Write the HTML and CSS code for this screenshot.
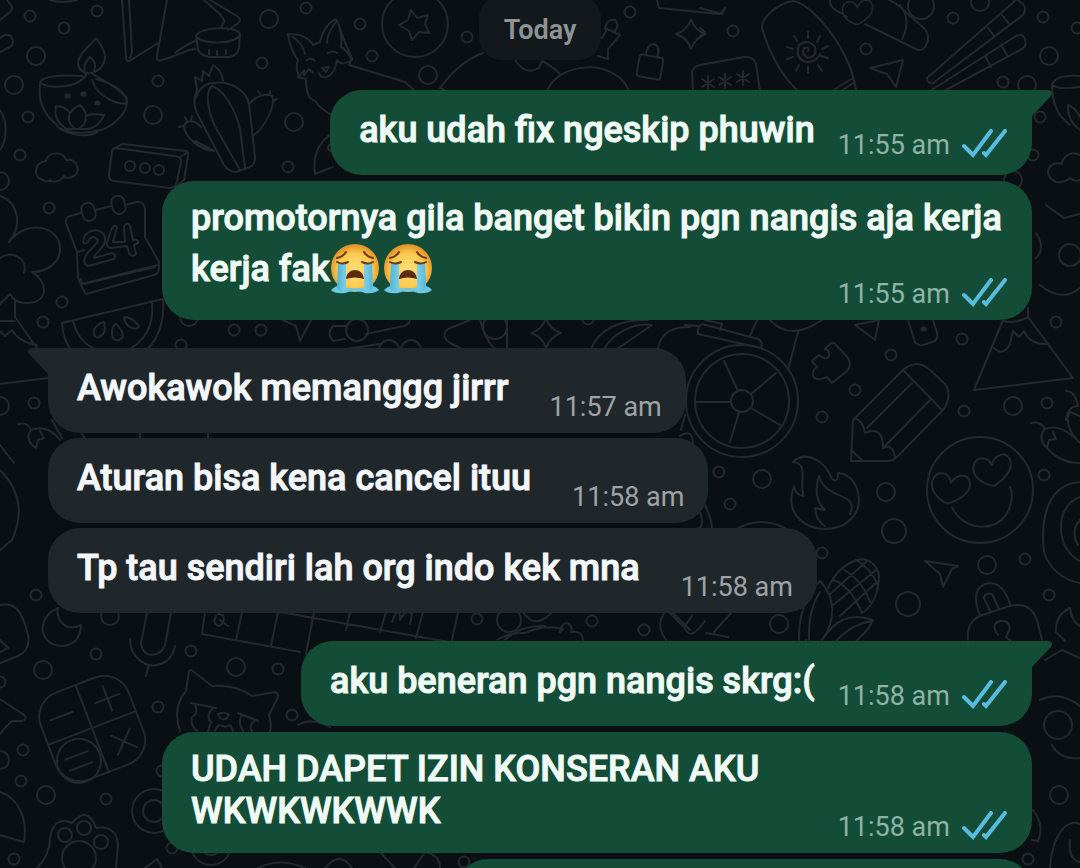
FILE: index.html
```html
<!DOCTYPE html>
<html lang="id">

<head>
    <meta charset="UTF-8">
    <meta name="viewport" content="width=device-width, initial-scale=1.0">
    <title>Chat</title>
    <link rel="stylesheet" href="styles.css">
</head>

<body>
    <!-- doodle wallpaper -->
    <svg class="wallpaper" viewBox="0 0 1080 868" preserveAspectRatio="xMidYMid slice" aria-hidden="true">
        <defs>
            <circle id="s" r="5.5" />
            <circle id="m" r="9" />
            <path id="heart" d="M0 17C-12 14-22 6-19-5C-16-14-4-14-1-4C3-15 15-17 18-7C20 3 9 12 0 17Z" />
            <path id="spark" d="M0-15Q4-3 15 0Q4 4 0 15Q-3 4-15 0Q-4-3 0-15Z" />
            <path id="ast" d="M0-7V7M-6-4L6 4M-6 4L6-4" />
        </defs>

        <!-- dots -->
        <use href="#s" x="30" y="16" /><use href="#s" x="97" y="11" /><use href="#s" x="64" y="28" />
        <use href="#s" x="306" y="8" /><use href="#s" x="262" y="63" /><use href="#s" x="158" y="81" />
        <use href="#s" x="28" y="117" /><use href="#s" x="20" y="155" /><use href="#s" x="288" y="167" />
        <use href="#s" x="49" y="208" /><use href="#s" x="62" y="302" /><use href="#s" x="43" y="322" />
        <use href="#s" x="234" y="330" /><use href="#s" x="261" y="330" /><use href="#s" x="181" y="345" />
        <use href="#s" x="34" y="403" /><use href="#s" x="360" y="24" /><use href="#s" x="467" y="37" />
        <use href="#s" x="372" y="56" /><use href="#s" x="630" y="12" /><use href="#s" x="733" y="31" />
        <use href="#s" x="866" y="49" /><use href="#s" x="953" y="18" /><use href="#s" x="1043" y="17" />
        <use href="#s" x="1077" y="28" /><use href="#s" x="1003" y="82" /><use href="#s" x="1040" y="117" />
        <use href="#s" x="1033" y="155" /><use href="#s" x="891" y="355" /><use href="#s" x="855" y="390" />
        <use href="#s" x="822" y="417" /><use href="#s" x="962" y="339" /><use href="#s" x="964" y="411" />
        <use href="#s" x="1056" y="322" /><use href="#s" x="1047" y="403" /><use href="#s" x="719" y="472" />
        <use href="#s" x="730" y="504" /><use href="#s" x="822" y="553" /><use href="#s" x="1044" y="475" />
        <use href="#s" x="1025" y="559" /><use href="#s" x="1049" y="595" /><use href="#s" x="36" y="595" />
        <use href="#s" x="96" y="654" /><use href="#s" x="191" y="651" /><use href="#s" x="278" y="669" />
        <use href="#s" x="158" y="707" /><use href="#s" x="292" y="715" /><use href="#s" x="23" y="750" />
        <use href="#s" x="21" y="781" /><use href="#s" x="106" y="799" /><use href="#s" x="14" y="859" />
        <use href="#s" x="172" y="848" /><use href="#s" x="0" y="682" /><use href="#s" x="162" y="771" />
        <use href="#s" x="477" y="619" /><use href="#s" x="592" y="621" /><use href="#s" x="644" y="630" />
        <use href="#s" x="588" y="319" /><use href="#s" x="464" y="862" /><use href="#s" x="1028" y="859" />
        <use href="#m" x="36" y="56" /><use href="#m" x="14" y="85" /><use href="#m" x="269" y="19" />
        <use href="#m" x="153" y="115" /><use href="#m" x="294" y="122" /><use href="#m" x="0" y="181" />
        <use href="#m" x="0" y="406" /><use href="#m" x="189" y="317" /><use href="#m" x="428" y="75" />
        <use href="#m" x="980" y="2" /><use href="#m" x="1049" y="56" /><use href="#m" x="1027" y="85" />
        <use href="#m" x="1013" y="180" /><use href="#m" x="1013" y="406" /><use href="#m" x="762" y="479" />
        <use href="#m" x="886" y="492" /><use href="#m" x="987" y="565" /><use href="#m" x="779" y="624" />
        <use href="#m" x="43" y="670" /><use href="#m" x="236" y="667" /><use href="#m" x="110" y="616" />
        <use href="#m" x="46" y="795" /><use href="#m" x="0" y="760" /><use href="#m" x="1059" y="795" />
        <circle cx="894" cy="531" r="12" /><circle cx="908" cy="604" r="12" /><circle cx="509" cy="620" r="12" />

        <!-- diya lamp -->
        <path d="M96 38C90 46 78 54 78 64C79 70 84 74 90 73C98 73 105 65 105 56C104 48 99 42 96 38ZM90 57C85 62 83 66 85 71M90 57C95 61 97 65 94 71M87 73C84 80 78 83 71 85C60 88 43 87 40 82C45 75 65 75 82 76M92 73C96 78 112 82 127 98M96 79C112 83 127 92 127 103C120 105 98 99 92 80M40 84C38 100 42 113 56 124C60 135 93 139 98 131C114 127 127 112 127 103M58 127C68 134 88 134 98 130M56 106C62 106 67 109 70 113C72 110 76 107 80 105C84 109 86 112 86 116C91 113 97 114 104 115C101 123 94 129 86 129H67C57 123 54 115 56 106M70 113Q66 122 74 128M86 116Q86 124 80 128" />
        <path d="M67 96h1M83 94h1M97 103h1" stroke-width="5" />
        <!-- map and pot -->
        <path d="M122 0L126 58Q127 63 131 60L158 43M129 0L132 52L130 58M167 0L157 56Q156 62 162 60C175 57 185 50 195 49M175 53Q185 45 195 41M204 0C210 6 222 14 224 20C226 24 220 23 222 27M210 0L237 16Q243 20 237 24L228 30M0 52L10 47Q15 43 12 38Q10 34 5 35L0 38M0 20L10 12Q14 8 10 4L7 0M50 0Q62 4 77 0" />
        <path d="M196 36C200 26 238 26 240 34C238 45 200 45 196 36ZM196 36L198 50Q201 56 210 57H230Q238 55 239 48L240 34M209 50V54M217 51V55M226 50V54" />
        <!-- cactus -->
        <path d="M197 90L195 77L202 81L203 71L209 76L213 65Q222 70 223 81M197 90C194 97 192 105 198 115L224 165Q229 172 236 172L250 167Q256 163 255 157L249 104C246 90 230 80 212 83C204 84 198 91 195 100M212 86C203 94 210 120 220 135L240 170M212 86C228 92 240 120 241 137L245 168M249 104C256 96 265 93 272 96C276 105 265 127 254 135M195 141L214 151C200 150 185 138 184 126C187 119 195 120 201 127M260 94L258 91M270 94V91M273 101L277 99M183 126L179 127M187 121L185 117M191 120L192 116" />
        <!-- fox -->
        <path d="M288 34C300 34 309 38 313 45L320 42C323 30 329 22 336 19C341 27 342 38 341 47C345 49 350 55 352 60C346 64 340 65 337 60C336 68 333 74 327 77Q320 78 319 73M288 34C290 47 294 55 298 60Q295 67 299 77L304 70V75L309 69L313 73M293 37Q303 44 305 54M327 43C327 34 332 27 336 22M307 60Q312 57 315 61M328 53Q333 50 337 53M322 68L329 67L326 72ZM298 77L306 79Q306 92 310 98L315 101C320 108 326 112 333 116M350 65L362 69" />
        <path d="M333 133C320 140 312 155 315 174L333 167M333 142Q323 149 333 152" />
        <!-- cloud and ticket box -->
        <path d="M43 180C33 178 33 163 46 161C48 151 64 151 66 160C78 157 82 174 72 177C67 179 65 178 64 176C58 184 51 182 50 180Q46 183 43 180Z" />
        <path d="M116 148L174 156Q181 156 181 162L177 181Q176 188 170 188L114 181Q108 180 109 174L112 152Q112 148 116 148ZM114 149L122 144L186 151Q189 152 188 156L184 180L176 187M180 157L187 153" />
        <circle cx="130" cy="166" r="5" /><circle cx="145" cy="168" r="5" /><circle cx="159" cy="170" r="5" />
        <!-- calendar -->
        <path d="M81 213L70 216Q65 218 66 223L77 252L78 278Q82 288 86 294L154 275Q159 273 159 268V262L145 237V209Q144 201 136 202L125 205M95 210L112 206M78 252L84 250M82 284L158 265M81 279Q80 285 88 283L155 267" />
        <rect x="82" y="203" width="13" height="18" rx="6" transform="rotate(-15 88 212)" /><rect x="112" y="196" width="13" height="18" rx="6" transform="rotate(-15 118 205)" />
        <path d="M83 242C83 227 107 226 105 241C104 249 95 252 94 258L112 253Q117 254 114 259L88 266Q83 264 85 258C87 250 98 245 98 240Q92 233 88 242Q85 245 83 242ZM117 227L113 242H125L124 226Q128 221 130 226L133 240Q139 239 138 243L134 245L136 254Q132 258 129 253L127 246L110 248Q106 246 107 242L112 228Q115 224 117 227Z" />
        <!-- flower tree and melon slice -->
        <path d="M0 196C18 202 23 225 9 242C26 219 60 225 60 249C60 262 48 272 32 272C47 280 50 301 29 303Q15 304 10 294L0 304M0 258C12 250 28 258 24 273M15 300V317L37 348M0 321H15M0 331L5 336L12 330Q20 343 37 345M0 110C8 122 7 140 0 150" />
        <path d="M62 323L163 299C165 325 157 343 140 356H75C68 347 62 336 62 323ZM73 321C78 340 90 350 105 351H125C145 343 154 325 152 303M94 334C92 330 98 323 104 322Q107 334 99 337Q95 338 94 334ZM112 334Q112 325 116 324Q123 330 123 337Q118 343 113 338ZM124 317Q132 317 139 326Q137 331 130 327Q124 323 124 317Z" />
        <!-- strip between bubbles -->
        <path d="M283 320L296 326L300 341L311 320M345 326H333Q326 334 333 341L345 339M366 334L404 326Q411 324 410 318M340 350L380 344M470 320L448 329Q440 336 450 343L462 349M480 320Q485 340 495 349M507 318V349M591 349C598 330 620 319 648 320M604 349C612 335 632 322 652 325M617 349L652 325M658 349C660 332 675 326 690 327" />
        <circle cx="357" cy="330" r="11" /><circle cx="389" cy="350" r="10" /><circle cx="411" cy="350" r="10" /><circle cx="495" cy="327" r="12" />
        <use href="#spark" x="546" y="333" />
        <!-- star coin, hills -->
        <circle cx="415" cy="24" r="33" />
        <path d="M411 10L417 18L428 15L425 24L429 33L419 32L412 40L409 31L399 25L408 20ZM483 53Q460 61 440 88L446 91M515 60Q525 76 539 68L542 61Q552 66 560 74M547 91C559 61 616 58 629 91M340 30L352 59L349 65L405 82L415 91M605 29Q607 18 615 20Q620 25 615 31M602 38L607 29L620 35L608 49V59L598 56M657 0L659 8L720 14L724 9" />
        <!-- padlock, sparkle, password card -->
        <rect x="638" y="56" width="24" height="22" rx="3" transform="rotate(10 650 67)" /><path d="M646 55Q647 44 654 44Q661 47 657 58" />
        <use href="#spark" x="691" y="34" />
        <path d="M693 91L692 72Q694 66 700 65L744 57Q754 56 756 64L760 91M700 8L722 14L725 8M700 28L705 32L700 36" />
        <use href="#ast" x="708" y="83" /><use href="#ast" x="725" y="81" /><use href="#ast" x="743" y="78" />
        <!-- surfboard -->
        <path d="M798 91C778 72 767 45 762 28C761 18 778 3 793 1C812 3 851 50 856 91M832 91L853 78M841 91L855 82" />
        <path d="M808 51Q810 46 804 48Q801 54 808 58Q817 57 815 47Q808 38 799 45Q795 56 803 61Q814 65 820 54M808 32V38M794 36L797 41M787 47L793 49M787 59L793 57M796 71L799 65M808 73V67M822 71L818 65M828 58L821 56M828 46L822 49M820 36L817 42" />
        <!-- skateboard -->
        <path d="M830 0Q829 8 841 13L847 17M865 24L918 50Q924 51 927 43Q930 36 925 29L900 7Q894 2 889 0M900 5Q912 20 902 39" />
        <use href="#heart" transform="translate(858 11) scale(.8)" /><circle cx="921" cy="6" r="13" />
        <path d="M870 68L903 60L896 87L887 74Z" />
        <!-- chopsticks -->
        <path d="M1016 0L927 78Q927 84 933 83L1023 15Q1027 9 1023 4L1018 0M988 28L994 36M1002 15L1009 24M930 91L1016 36Q1023 33 1025 39Q1027 46 1022 49L944 91M985 56L991 67M1001 45L1008 57" />
        <!-- bowl, cloud -->
        <path d="M1080 76Q1055 74 1052 85Q1058 90 1080 87M1052 85Q1052 112 1070 125M1068 105Q1076 108 1080 117M1068 105Q1067 121 1080 130M1080 155C1070 150 1062 158 1062 164C1048 160 1042 176 1056 182Q1064 183 1070 178Q1074 182 1080 180" />
        <!-- wheel -->
        <circle cx="742" cy="401" r="56" /><circle cx="742" cy="401" r="47" /><circle cx="742" cy="401" r="11" />
        <path d="M738 391L724 361M751 394L776 373M751 408L780 425M739 412L730 442M731 402H696M702 324L758 339Q763 341 761 348L698 334Q697 327 702 324ZM705 320L722 324L720 330M757 320L750 336M770 320Q790 342 822 320M798 332L788 370M685 325L698 326M685 415L681 430M680 436Q693 428 693 444" />
        <!-- puzzle, arrow, card -->
        <path d="M831 343Q834 342 836 345L848 358Q852 366 847 371L832 383L827 377Q816 382 813 376Q812 370 817 367L812 361L819 355Q826 361 829 356Q830 350 825 349ZM855 325L879 320L875 340ZM908 320L915 342Q918 346 923 345L935 341Q938 338 937 333L933 320" />
        <path d="M923 329h1" stroke-width="5" />
        <!-- pencil -->
        <path d="M855 418L903 370Q917 358 930 370L945 384Q953 396 943 410L897 457Q893 461 886 461H851L853 421ZM912 383L867 428M930 400L885 446M903 370L942 410M855 418Q864 422 865 433Q883 425 883 448Q893 443 895 458M851 450L863 461" />
        <!-- mountain -->
        <path d="M1003 320L974 390L1073 378L1028 317V308M1028 317Q1015 324 1003 321M994 348Q1003 357 1010 344L1013 331L1019 337L1024 331Q1030 345 1048 344" />
        <!-- chillies -->
        <path d="M1031 423Q1040 421 1045 429C1058 424 1070 432 1080 443M1045 429Q1037 438 1047 448L1049 440L1056 439L1053 432M1047 448Q1060 463 1080 463M1066 391Q1075 391 1078 406M1066 420L1070 412L1080 416M1068 420Q1068 432 1080 443M1066 420Q1068 406 1078 406" />
        <!-- heart eyes -->
        <circle cx="980" cy="490" r="53" />
        <use href="#heart" transform="translate(951 487) rotate(12)" /><use href="#heart" transform="translate(993 469) rotate(-5)" />
        <path d="M952 507C962 532 1005 536 1011 502Q1013 494 1010 487" />
        <!-- flame -->
        <path d="M793 462C805 450 825 460 832 479Q838 484 838 473C858 475 862 500 857 510C850 527 830 532 812 527C794 520 787 505 794 486Q796 496 804 496C798 485 810 463 793 462ZM819 476Q812 498 825 510L815 508Q816 521 825 526M819 476C825 500 860 492 850 514" />
        <!-- onion rings at the edge -->
        <path d="M1080 482C1048 484 1040 518 1044 552Q1053 578 1080 583M1080 497C1053 507 1056 550 1080 561M1080 520Q1070 531 1078 545" />
        <path d="M925 561L958 566L952 569L943 587L940 574ZM735 530Q758 515 785 528M705 505Q712 520 712 529M700 512Q706 530 694 529" />
        <!-- corn -->
        <path d="M828 588Q838 566 857 560C870 556 880 568 879 580Q876 605 862 613M833 580Q850 585 862 613M844 570Q862 580 870 602M856 560Q870 568 878 585M830 594L866 562M832 606L876 570M840 616L879 580M820 581C810 590 798 610 799 640M820 581C836 598 836 620 822 640M820 592Q808 610 809 640M822 640C835 620 850 612 873 620C866 635 852 645 838 655M873 621Q845 625 830 650M806 640Q808 650 820 655" />
        <!-- big padlock -->
        <path d="M980 616Q970 590 985 584Q1002 579 1010 604M990 611L984 598Q985 592 992 594L999 609M968 640Q966 621 982 615L1010 606Q1030 601 1037 620L1042 640M998 635Q990 624 1000 621Q1011 620 1009 631L1006 637L1012 642M1070 608Q1055 615 1056 632L1065 641M1070 608Q1072 622 1080 626" />
        <!-- shapes peeking out under incoming bubbles -->
        <path d="M0 384L48 378M52 420L62 438M82 434L86 440M140 432V440M208 432V440M18 424Q28 422 31 430Q48 424 60 440M31 430Q24 440 36 448L38 440L44 438L40 431M0 445L14 463M0 470Q30 500 12 540L0 550M670 613L684 627L692 616M684 627Q690 640 700 627L705 621M706 633L728 637M714 632L731 613" />
        <!-- moon, mic, keyboard -->
        <path d="M58 608C36 617 38 645 62 646Q80 645 81 625Q70 631 62 623Q56 616 58 608ZM0 605C15 602 22 610 28 635Q31 650 18 656L0 663M0 640L8 648L0 652M147 613L141 643Q142 654 152 655Q162 654 165 645L171 613M130 639C130 660 148 667 157 665Q172 662 175 646M149 665L146 676" />
        <path d="M205 612L202 634L300 652M242 612L236 640M278 612L271 646M314 612L306 654M350 612L346 630M386 612L380 632M423 612L416 638M458 612L452 640M280 612L460 644M216 616Q212 624 219 626Q226 622 223 615L218 614M220 620L228 626M392 622L396 612Q401 612 400 620Q406 608 412 614L410 624" />
        <path d="M497 640Q510 632 525 633Q545 624 563 629L560 632Q562 622 568 623Q573 627 571 632Q582 630 583 640M505 640Q520 625 545 626M523 612Q535 630 551 613M665 612Q655 625 666 640M672 612L690 630" />
        <!-- calculator -->
        <g transform="rotate(-21 92 728)">
            <rect x="45" y="682" width="94" height="93" rx="26" />
            <path d="M92 682V775M45 728H139M56 706H80M104 706H130M117 693V719M107 742L127 762M127 742L107 762M56 748H80M56 760H80" /><circle cx="68" cy="754" r="22" />
        </g>
        <!-- crying cat -->
        <path d="M180 731Q172 707 186 691L189 671Q191 669 194 672L212 686Q235 684 252 696L275 692Q279 693 278 697L269 715Q272 724 270 731M191 703L216 708M195 705Q199 713 192 717Q190 725 197 731M213 708Q205 716 211 722L208 731M238 713L258 721M242 715Q237 721 243 731M255 720Q248 727 252 731M218 714Q225 711 229 715Q225 722 220 718ZM215 731Q218 722 225 727Q231 722 233 731" />
        <!-- left edge, donut, paw, bottom strip -->
        <path d="M0 699L24 715Q28 719 22 721H12Q6 726 0 734M0 792C18 798 28 818 24 842L0 835" />
        <circle cx="154" cy="811" r="22" /><circle cx="154" cy="811" r="11" /><circle cx="211" cy="845" r="20" /><circle cx="211" cy="845" r="10" />
        <circle cx="65" cy="835" r="7" /><circle cx="84" cy="828" r="7" /><circle cx="101" cy="842" r="7" /><circle cx="79" cy="858" r="17" />
        <path d="M37 868Q50 855 50 838Q54 815 72 823Q88 805 96 828Q117 825 118 845L116 868M145 868L157 859L162 868M258 868Q280 857 305 868M298 725Q310 717 330 727M325 868Q340 850 352 868M380 852L395 868M414 868L425 852Q440 855 440 868" />
        <!-- right edge -->
        <path d="M1050 868Q1052 842 1062 830Q1070 820 1080 824M1033 810Q1045 825 1038 841L1032 840M1070 840Q1068 860 1080 862M1040 700Q1060 690 1080 706M1052 745Q1060 760 1080 758M1045 660L1062 650L1080 658M1036 233Q1046 248 1036 258M1040 285Q1062 303 1080 288M1046 205L1064 218L1080 214" />
        <circle cx="1058" cy="725" r="14" /><circle cx="1070" cy="255" r="11" />
    </svg>

    <main class="chat">
        <div class="day">Today</div>

        <section class="group out">
            <div class="bubble tail single">
                <p>aku udah fix ngeskip phuwin</p>
                <div class="meta"><time>11:55 am</time><svg class="ticks" viewBox="0 0 46 30"><path d="M2 17L11 26L29 2M22 24L24 26L43 2" /></svg></div>
                <svg class="tip" viewBox="0 0 20 26"><path d="M0 0H16Q23 1 18 7L0 26Z" /></svg>
            </div>
            <div class="bubble">
                <p>promotornya gila banget bikin pgn nangis aja kerja kerja fak<svg class="emoji" viewBox="0 0 50 51" role="img" aria-label="😭">
                        <defs>
                            <radialGradient id="face" cx=".5" cy=".55" r=".55">
                                <stop offset="0" stop-color="#ffe27a" />
                                <stop offset=".65" stop-color="#fcc94d" />
                                <stop offset="1" stop-color="#dd8d26" />
                            </radialGradient>
                            <linearGradient id="tear" x1="0" x2="1" y1="0" y2="0">
                                <stop offset="0" stop-color="#4fb4d8" />
                                <stop offset=".5" stop-color="#a9e8f7" />
                                <stop offset="1" stop-color="#57b8da" />
                            </linearGradient>
                        </defs>
                        <circle cx="25" cy="25" r="24" fill="url(#face)" />
                        <path d="M1 47Q5 43 11 42L16 45H34L39 42Q46 43 49 47Q44 51 35 50Q25 46 15 50Q5 51 1 47Z" fill="#6cc9e5" />
                        <path d="M8 20H16V42Q17 47 13 48Q7 48 7 43ZM34 20H42L43 43Q43 48 37 48Q33 47 34 42Z" fill="url(#tear)" />
                        <path d="M16 36C17 24 33 24 34 36Q25 33 16 36Z" fill="#5e2a10" />
                        <path d="M7 19Q12 22 18 19M32 19Q38 22 43 19M7 15Q13 14 16 9M43 15Q37 14 34 9" fill="none" stroke="#6b3c13" stroke-width="2" stroke-linecap="round" />
                    </svg><svg class="emoji" viewBox="0 0 50 51" role="img" aria-label="😭">
                        <circle cx="25" cy="25" r="24" fill="url(#face)" />
                        <path d="M1 47Q5 43 11 42L16 45H34L39 42Q46 43 49 47Q44 51 35 50Q25 46 15 50Q5 51 1 47Z" fill="#6cc9e5" />
                        <path d="M8 20H16V42Q17 47 13 48Q7 48 7 43ZM34 20H42L43 43Q43 48 37 48Q33 47 34 42Z" fill="url(#tear)" />
                        <path d="M16 36C17 24 33 24 34 36Q25 33 16 36Z" fill="#5e2a10" />
                        <path d="M7 19Q12 22 18 19M32 19Q38 22 43 19M7 15Q13 14 16 9M43 15Q37 14 34 9" fill="none" stroke="#6b3c13" stroke-width="2" stroke-linecap="round" />
                    </svg></p>
                <div class="meta"><time>11:55 am</time><svg class="ticks" viewBox="0 0 46 30"><path d="M2 17L11 26L29 2M22 24L24 26L43 2" /></svg></div>
            </div>
        </section>

        <section class="group in">
            <div class="bubble tail single">
                <svg class="tip" viewBox="0 0 20 26"><path d="M20 0H4Q-3 1 2 7L20 26Z" /></svg>
                <p>Awokawok memanggg jirrr</p>
                <div class="meta"><time>11:57 am</time></div>
            </div>
            <div class="bubble single">
                <p>Aturan bisa kena cancel ituu</p>
                <div class="meta"><time>11:58 am</time></div>
            </div>
            <div class="bubble single">
                <p>Tp tau sendiri lah org indo kek mna</p>
                <div class="meta"><time>11:58 am</time></div>
            </div>
        </section>

        <section class="group out">
            <div class="bubble tail single">
                <p>aku beneran pgn nangis skrg:(</p>
                <div class="meta"><time>11:58 am</time><svg class="ticks" viewBox="0 0 46 30"><path d="M2 17L11 26L29 2M22 24L24 26L43 2" /></svg></div>
                <svg class="tip" viewBox="0 0 20 26"><path d="M0 0H16Q23 1 18 7L0 26Z" /></svg>
            </div>
            <div class="bubble">
                <p>UDAH DAPET IZIN KONSERAN AKU WKWKWKWWK</p>
                <div class="meta"><time>11:58 am</time><svg class="ticks" viewBox="0 0 46 30"><path d="M2 17L11 26L29 2M22 24L24 26L43 2" /></svg></div>
            </div>
            <div class="bubble next"></div>
        </section>
    </main>
</body>

</html>
```

FILE: styles.css
```css
body {
    margin: 0;
    height: 100vh;
    overflow: hidden;
    position: relative;
    background-color: #0a0f13;
    font-family: Roboto, sans-serif;
}

.wallpaper {
    position: absolute;
    top: 0;
    left: 0;
    width: 100%;
    height: 100%;
    fill: none;
    stroke: #25292d;
    stroke-width: 2;
    stroke-linecap: round;
    stroke-linejoin: round;
}

.chat {
    position: relative;
    display: flex;
    flex-direction: column;
    gap: 28px;
    padding: 0 48px;
}

.day {
    align-self: center;
    margin: -4px 0 2px;
    padding: 18px 25px 14px;
    border-radius: 22px;
    background-color: #12181b;
    color: #8d9396;
    font-size: 27px;
    font-weight: 600;
    line-height: 32px;
}

.group {
    display: flex;
    flex-direction: column;
    gap: 6px;
}

.group.out {
    align-items: flex-end;
    margin-left: 114px;
}

.group.in {
    align-items: flex-start;
    gap: 5px;
}

.bubble {
    position: relative;
    display: grid;
    padding: 16px 24px 21px 29px;
    border-radius: 32px;
}

.bubble p {
    grid-area: 1 / 1;
    margin: 0;
    font-size: 36px;
    font-weight: 500;
    line-height: 42px;
    -webkit-text-stroke: 1px currentColor;
}

.meta {
    grid-area: 1 / 1;
    align-self: end;
    justify-self: end;
    display: flex;
    align-items: flex-start;
    gap: 12px;
    margin-bottom: -11px;
    font-size: 27px;
    font-weight: 450;
    line-height: 32px;
}

.single {
    grid-template-columns: auto auto;
    padding: 19px 24px 24px 29px;
}

.single .meta {
    grid-area: 1 / 2;
    margin-bottom: -10px;
}

.out .bubble {
    background-color: #144d37;
    color: #f0fbf6;
}

.out .single {
    column-gap: 23px;
}

.out .meta {
    color: #8fb3a4;
}

.in .bubble {
    background-color: #20272b;
    color: #f4f7fb;
}

.in .single {
    column-gap: 41px;
}

.in .meta {
    margin-bottom: -14px;
    color: #9fa3a5;
}

.ticks {
    width: 46px;
    height: 30px;
    fill: none;
    stroke: #58bbe0;
    stroke-width: 4;
    stroke-linecap: round;
}

.tip {
    position: absolute;
    top: 0;
    width: 20px;
    height: 26px;
}

.out .tip {
    left: 100%;
    fill: #144d37;
}

.in .tip {
    right: 100%;
    fill: #20272b;
}

.out .tail {
    border-top-right-radius: 0;
}

.in .tail {
    border-top-left-radius: 0;
}

.emoji {
    width: 50px;
    height: 51px;
    margin: 4px 3px 5px 0;
    vertical-align: -18px;
}

.next {
    width: 523px;
    height: 48px;
}
```
